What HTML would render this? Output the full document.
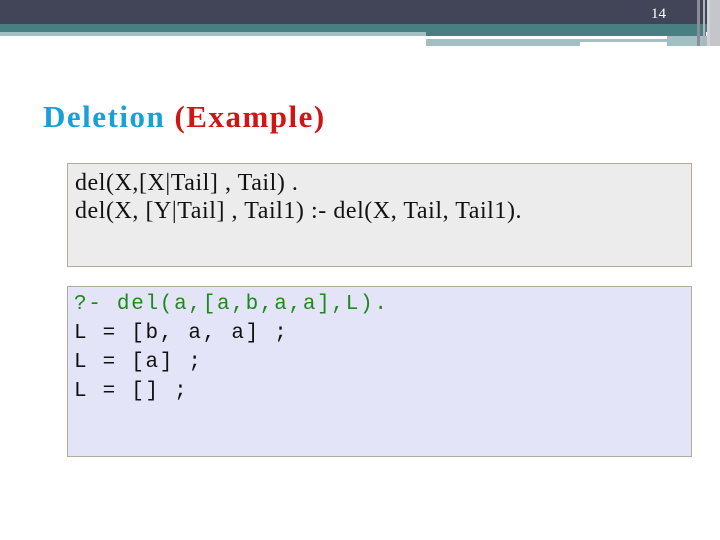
<!DOCTYPE html>
<html><head><style>
body{margin:0;width:720px;height:540px;background:#fff;position:relative;overflow:hidden}
div{position:absolute}
.t{font-family:"Liberation Serif",serif}
.m{font-family:"Liberation Mono",monospace;font-size:21px;letter-spacing:1.7px;line-height:29px;white-space:pre}
</style></head><body>
<div style="left:0;top:0;width:720px;height:24px;background:#424457"></div>
<div style="left:0;top:24px;width:720px;height:8px;background:#477f83"></div>
<div style="left:0;top:32px;width:426px;height:4px;background:#a2bfc3"></div>
<div style="left:426px;top:32px;width:280px;height:4px;background:#477f83"></div>
<div style="left:426px;top:36px;width:241px;height:3px;background:#fff"></div>
<div style="left:426px;top:39px;width:154px;height:7px;background:#a2bfc3"></div>
<div style="left:580px;top:39px;width:87px;height:3px;background:#a2bfc3"></div>
<div style="left:667px;top:36px;width:40px;height:10px;background:#a2bfc3"></div>
<div style="left:697px;top:0;width:3px;height:46px;background:#8a8d98"></div>
<div style="left:703px;top:0;width:2px;height:46px;background:#b0b2ba"></div>
<div style="left:707px;top:0;width:3px;height:46px;background:#d0d2d8"></div>
<div style="left:710px;top:0;width:10px;height:46px;background:#c4c6cc"></div>
<div class="t" style="left:651px;top:6px;font-size:15px;color:#fff">14</div>
<div class="t" style="left:43px;top:99px;font-size:31px;letter-spacing:1.5px;font-weight:bold;color:#1aa0d8">Deletion <span style="color:#d01515">(Example)</span></div>
<div style="left:67px;top:163px;width:623px;height:102px;background:#ececec;border:1px solid #b3ab9b"></div>
<div class="t" style="left:75px;top:169px;font-size:24px;letter-spacing:0.55px;line-height:28px;color:#111">del(X,[X|Tail] , Tail) .<br>del(X, [Y|Tail] , Tail1) :- del(X, Tail, Tail1).</div>
<div style="left:67px;top:286px;width:623px;height:169px;background:#e4e4f8;border:1px solid #b3ab9b"></div>
<div class="m" style="left:74px;top:290px;color:#1a8a1a">?- del(a,[a,b,a,a],L).</div>
<div class="m" style="left:74px;top:319px;color:#111">L = [b, a, a] ;
L = [a] ;
L = [] ;</div>
</body></html>
